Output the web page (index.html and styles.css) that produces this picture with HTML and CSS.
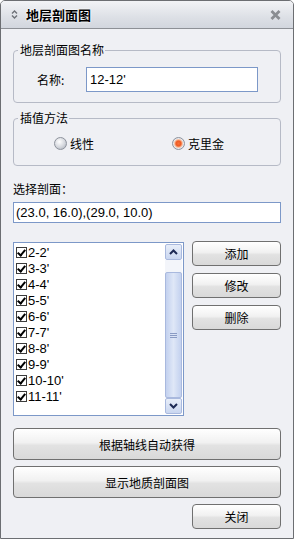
FILE: index.html
```html
<!DOCTYPE html>
<html lang="zh-CN">
<head>
  <meta charset="UTF-8">
  <title>地层剖面图</title>
  <link rel="stylesheet" href="styles.css">
</head>
<body>
  <div class="window">
    <div class="titlebar">
      <svg class="title-icon" width="7" height="11" viewBox="0 0 7 11">
        <path d="M1 4.5 L3.5 2 L6 4.5 M1 6.5 L3.5 9 L6 6.5" fill="none" stroke="#6e7278" stroke-width="1.4"/>
      </svg>
      <span class="title">地层剖面图</span>
      <svg class="close" width="11" height="10" viewBox="0 0 11 10">
        <path d="M1.5 1 L9.5 9 M9.5 1 L1.5 9" stroke="#8a8d92" stroke-width="2.8"/>
      </svg>
    </div>

    <div class="content">
      <fieldset class="group group-name">
        <legend>地层剖面图名称</legend>
        <div class="name-row">
          <span class="name-label">名称:</span>
          <div class="textbox name-box"><span class="latin">12-12'</span></div>
        </div>
      </fieldset>

      <fieldset class="group group-method">
        <legend>插值方法</legend>
        <div class="radios">
          <span class="radio"><span class="dot"></span>线性</span>
          <span class="radio checked"><span class="dot"></span>克里金</span>
        </div>
      </fieldset>

      <div class="field-label">选择剖面：</div>
      <div class="textbox section-box"><span class="latin">(23.0, 16.0),(29.0, 10.0)</span></div>

      <div class="list-area">
        <div class="listbox">
          <ul class="items">
            <li><span class="check"></span><span class="latin">2-2'</span></li>
            <li><span class="check"></span><span class="latin">3-3'</span></li>
            <li><span class="check"></span><span class="latin">4-4'</span></li>
            <li><span class="check"></span><span class="latin">5-5'</span></li>
            <li><span class="check"></span><span class="latin">6-6'</span></li>
            <li><span class="check"></span><span class="latin">7-7'</span></li>
            <li><span class="check"></span><span class="latin">8-8'</span></li>
            <li><span class="check"></span><span class="latin">9-9'</span></li>
            <li><span class="check"></span><span class="latin">10-10'</span></li>
            <li><span class="check"></span><span class="latin">11-11'</span></li>
          </ul>
          <div class="scrollbar">
            <div class="sb-btn">
              <svg width="9" height="6" viewBox="0 0 9 6"><path d="M1 5 L4.5 1.5 L8 5" fill="none" stroke="#1d2a55" stroke-width="2"/></svg>
            </div>
            <div class="sb-track">
              <div class="sb-thumb"><span class="grip"></span></div>
            </div>
            <div class="sb-btn">
              <svg width="9" height="6" viewBox="0 0 9 6"><path d="M1 1 L4.5 4.5 L8 1" fill="none" stroke="#1d2a55" stroke-width="2"/></svg>
            </div>
          </div>
        </div>
        <div class="side-buttons">
          <button class="btn">添加</button>
          <button class="btn">修改</button>
          <button class="btn">删除</button>
        </div>
      </div>

      <button class="btn wide">根据轴线自动获得</button>
      <button class="btn wide">显示地质剖面图</button>
      <div class="footer">
        <button class="btn">关闭</button>
      </div>
    </div>
  </div>
</body>
</html>
```

FILE: styles.css
```css
body {
  margin: 0;
  font-family: "Noto Sans CJK SC", sans-serif;
  font-size: 12px;
  color: #000;
  background: #fff;
}
.window {
  width: 294px;
  height: 539px;
  box-sizing: border-box;
  border: 1px solid #6c6e72;
  border-radius: 5px 5px 0 0;
  background: #eff0f4;
  overflow: hidden;
}
.titlebar {
  height: 27px;
  display: flex;
  align-items: center;
  padding: 0 12px 0 10px;
  border-bottom: 1px solid #8d9096;
  background: linear-gradient(#f2f3f6, #dde0e6 60%, #d2d6de);
}
.title-icon {
  margin-right: 8px;
}
.title {
  flex: 1;
  font-size: 13px;
  font-weight: bold;
  text-shadow: 0 0 2px #fff, 0 0 2px #fff;
}
.content {
  padding: 0 12px;
  display: flex;
  flex-direction: column;
}
.latin {
  font-family: "Liberation Sans", sans-serif;
  font-size: 13px;
}
.group {
  margin: 0;
  border: 1px solid #b6bac6;
  border-radius: 4px;
  padding: 0;
}
.group legend {
  padding: 0 1px 0 2px;
  margin-left: 4px;
  line-height: 14px;
}
.group-name {
  margin-top: 14px;
  height: 60px;
  box-sizing: border-box;
}
.name-row {
  display: flex;
  align-items: center;
  margin-top: 10px;
}
.name-label {
  width: 49px;
  padding-left: 23px;
}
.textbox {
  box-sizing: border-box;
  border: 1px solid #7c98c8;
  background: #fff;
  display: flex;
  align-items: center;
  padding-left: 3px;
}
.name-box {
  width: 172px;
  height: 25px;
}
.group-method {
  margin-top: 8px;
  height: 55px;
  box-sizing: border-box;
}
.radios {
  display: flex;
  margin-top: 10px;
}
.radio {
  display: flex;
  align-items: center;
  gap: 3px;
}
.radio:first-child {
  margin-left: 40px;
  width: 118px;
}
.dot {
  width: 13px;
  height: 13px;
  box-sizing: border-box;
  border-radius: 50%;
  border: 1px solid #8d929c;
  background: radial-gradient(circle at 40% 35%, #ffffff, #d4d7dd 55%, #a4a9b3);
}
.radio.checked .dot {
  background: radial-gradient(circle at 50% 50%, #f4703a 0, #ef5a22 2.5px, #f7c2a4 4px, #e7e9ee 5px, #bfc3cb);
}
.field-label {
  margin-top: 15px;
  line-height: 16px;
}
.section-box {
  margin-top: 5px;
  height: 21px;
  padding-left: 2px;
}
.list-area {
  display: flex;
  margin-top: 19px;
  gap: 8px;
}
.listbox {
  width: 172px;
  height: 174px;
  box-sizing: border-box;
  border: 1px solid #7c98c8;
  background: #fff;
  display: flex;
}
.items {
  flex: 1;
  list-style: none;
  margin: 0;
  padding: 1px 0 0 2px;
}
.items li {
  height: 16px;
  display: flex;
  align-items: center;
}
.check {
  width: 11px;
  height: 11px;
  box-sizing: border-box;
  border: 1px solid #3c3c3c;
  margin-right: 1px;
  position: relative;
}
.check::after {
  content: "";
  position: absolute;
  left: 2px;
  top: 0;
  width: 3px;
  height: 6px;
  border: solid #000;
  border-width: 0 2px 2px 0;
  transform: rotate(40deg);
}
.scrollbar {
  width: 17px;
  display: flex;
  flex-direction: column;
  padding: 1px 1px 1px 0;
}
.sb-btn {
  height: 16px;
  box-sizing: border-box;
  border: 1px solid #a9b9de;
  border-radius: 2px;
  background: linear-gradient(#e8eef9, #c9d6f0);
  display: flex;
  align-items: center;
  justify-content: center;
}
.sb-track {
  flex: 1;
  display: flex;
  flex-direction: column;
  background: #f3f5fa;
  padding-top: 12px;
}
.sb-thumb {
  flex: 1;
  border: 1px solid #a9b9de;
  border-radius: 2px;
  background: linear-gradient(90deg, #c3d1ef, #dfe7f7 50%, #c3d1ef);
  display: flex;
  align-items: center;
  justify-content: center;
}
.grip {
  width: 7px;
  height: 5px;
  border-top: 1px solid #8a9bc4;
  border-bottom: 1px solid #8a9bc4;
  box-sizing: border-box;
  background: linear-gradient(#8a9bc4, #8a9bc4) center / 100% 1px no-repeat;
}
.side-buttons {
  display: flex;
  flex-direction: column;
  gap: 7px;
  margin-top: -1px;
}
.btn {
  font-family: "Noto Sans CJK SC", sans-serif;
  font-size: 12px;
  color: #000;
  width: 89px;
  height: 25px;
  padding: 0;
  border: 1px solid #707070;
  border-radius: 4px;
  background: linear-gradient(#ffffff, #f1f1f1 45%, #e2e2e2 55%, #d9d9d9);
}
.btn.wide {
  width: 268px;
  height: 32px;
  margin-top: 6px;
}
.list-area + .btn.wide {
  margin-top: 12px;
}
.footer {
  display: flex;
  justify-content: flex-end;
  margin-top: 6px;
}
```
